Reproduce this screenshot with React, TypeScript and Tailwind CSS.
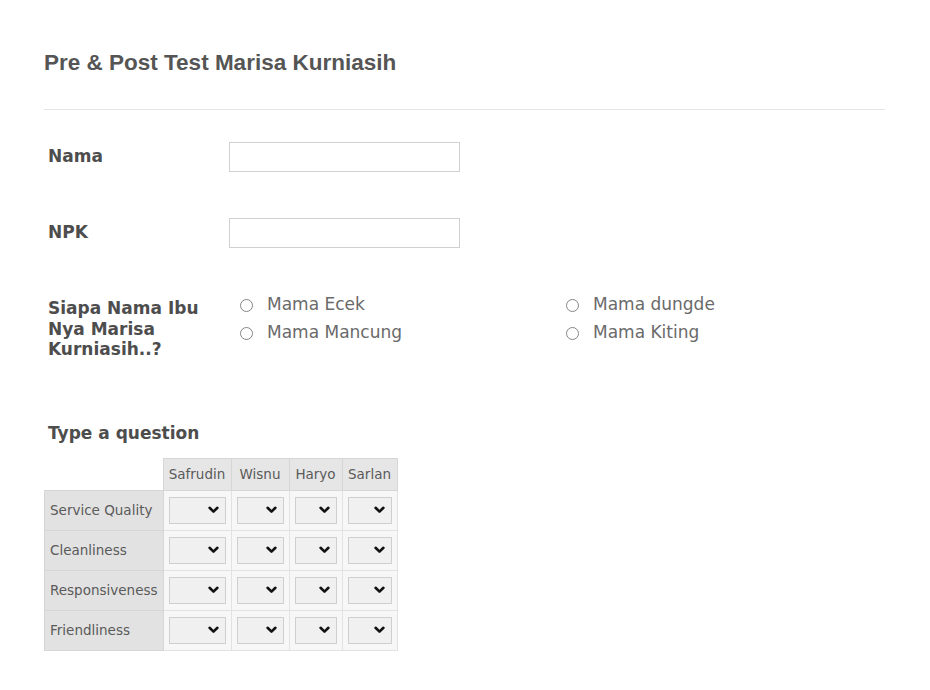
import React from "react";

const Radio = ({ label }: { label: string }) => (
  <div className="flex items-center h-[28px]">
    <span className="w-[13px] h-[13px] rounded-full border border-[#858585] bg-white shrink-0" />
    <span className="ml-[14px] text-[17px] text-[#6a6a6a]">{label}</span>
  </div>
);

const Chevron = () => (
  <svg width="11" height="8" viewBox="0 0 11 8" className="shrink-0">
    <path d="M1.6 1.8 L5.5 5.6 L9.4 1.8" fill="none" stroke="#111" strokeWidth="2.6" strokeLinecap="round" strokeLinejoin="round" />
  </svg>
);

const Select = () => (
  <div className="h-[27px] w-full bg-[#f0f0f0] border border-[#cfcfcf] flex items-center justify-end pr-[6px]">
    <Chevron />
  </div>
);

const cols = [
  { name: "Safrudin", w: "w-[68px]" },
  { name: "Wisnu", w: "w-[58px]" },
  { name: "Haryo", w: "w-[53px]" },
  { name: "Sarlan", w: "w-[55px]" },
];
const rows = ["Service Quality", "Cleanliness", "Responsiveness", "Friendliness"];

export default function App() {
  return (
    <div
      className="w-[930px] h-[690px] bg-white px-[44px] pt-[50px]"
      style={{ fontFamily: '"DejaVu Sans", Verdana, sans-serif' }}
    >
      <h1
        className="text-[22.5px] leading-[26px] font-bold text-[#555555]"
        style={{ fontFamily: '"Liberation Sans", Arial, sans-serif' }}
      >
        Pre &amp; Post Test Marisa Kurniasih
      </h1>
      <div className="mt-[33px] h-px w-[841px] bg-[#e5e5e5]" />

      <div className="flex items-center mt-[32px] pl-[4px]">
        <div className="w-[181px] shrink-0 text-[17px] font-bold text-[#4d4d4d]">Nama</div>
        <div className="w-[231px] h-[30px] border border-[#d0d0d0] bg-white" />
      </div>

      <div className="flex items-center mt-[46px] pl-[4px]">
        <div className="w-[181px] shrink-0 text-[17px] font-bold text-[#4d4d4d]">NPK</div>
        <div className="w-[231px] h-[30px] border border-[#d0d0d0] bg-white" />
      </div>

      <div className="flex items-start mt-[42px] pl-[4px]">
        <div className="w-[181px] shrink-0 text-[17px] leading-[20.5px] font-bold text-[#4d4d4d] pt-[8px]">
          Siapa Nama Ibu Nya Marisa Kurniasih..?
        </div>
        <div className="grid grid-cols-[326px_326px] ml-[11px] pt-[1px]">
          <div className="flex flex-col">
            <Radio label="Mama Ecek" />
            <Radio label="Mama Mancung" />
          </div>
          <div className="flex flex-col">
            <Radio label="Mama dungde" />
            <Radio label="Mama Kiting" />
          </div>
        </div>
      </div>

      <div className="mt-[63px] pl-[4px] text-[17px] leading-[20px] font-bold text-[#4d4d4d]">
        Type a question
      </div>

      <table className="mt-[15px] border-collapse text-[#555555]">
        <thead>
          <tr className="h-[32px]">
            <th className="w-[118px] p-0" />
            {cols.map((c) => (
              <th
                key={c.name}
                className={`${c.w} p-0 bg-[#e6e6e6] border border-[#d6d6d6] font-normal text-[13.5px] text-[#5a5a5a]`}
              >
                {c.name}
              </th>
            ))}
          </tr>
        </thead>
        <tbody>
          {rows.map((r) => (
            <tr key={r} className="h-[40px]">
              <td className="bg-[#e2e2e2] border border-[#d6d6d6] px-[5px] text-[13.5px] text-[#5a5a5a] whitespace-nowrap">
                {r}
              </td>
              {cols.map((c) => (
                <td key={c.name} className="bg-[#f7f7f7] border border-[#e2e2e2] px-[5px]">
                  <Select />
                </td>
              ))}
            </tr>
          ))}
        </tbody>
      </table>
    </div>
  );
}
